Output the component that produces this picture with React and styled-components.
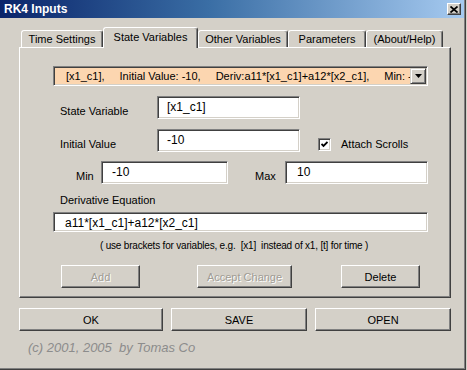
import React from "react";
import styled, { createGlobalStyle } from "styled-components";

const Global = createGlobalStyle`
  html, body { margin: 0; padding: 0; background: #d4d0c8; }
  body { font-family: "Liberation Sans", Arial, sans-serif; font-size: 11px; color: #000; }
  * { box-sizing: border-box; }
`;

const Window = styled.div`
  width: 466px;
  height: 370px;
  background: #d4d0c8;
  border-right: 1px solid #404040;
  border-bottom: 1px solid #404040;
  box-shadow: inset -1px -1px #808080;
  display: flex;
  flex-direction: column;
`;

const TitleBar = styled.div`
  height: 18px;
  width: 464px;
  background: linear-gradient(to right, #0a246a 0%, #3a6ea5 45%, #a6caf0 100%);
  display: flex;
  align-items: center;
  justify-content: space-between;
  padding: 0 3px 0 4px;
`;

const Title = styled.span`
  color: #fff;
  font-weight: bold;
  font-size: 12px;
`;

const CloseButton = styled.div`
  width: 14px;
  height: 12px;
  background: #d4d0c8;
  border: 1px solid;
  border-color: #fff #404040 #404040 #fff;
  box-shadow: inset -1px -1px #808080;
  display: flex;
  align-items: center;
  justify-content: center;
`;

const Body = styled.div`
  padding: 9px 0 0 19px;
  display: flex;
  flex-direction: column;
`;

const TabStrip = styled.div`
  height: 20px;
  display: flex;
  align-items: flex-end;
  padding-left: 2px;
`;

const Tab = styled.div`
  position: relative;
  z-index: ${(p) => (p.$active ? 2 : 1)};
  width: ${(p) => p.$w}px;
  height: ${(p) => (p.$active ? 21 : 17)}px;
  margin-bottom: ${(p) => (p.$active ? -1 : 0)}px;
  background: #d4d0c8;
  border: 1px solid;
  border-bottom: none;
  border-color: #fff #404040 transparent #fff;
  border-radius: 3px 3px 0 0;
  box-shadow: inset -1px 0 #808080;
  text-align: center;
  padding-top: ${(p) => (p.$active ? 3 : 2)}px;
  font-size: 11px;
  white-space: nowrap;
`;

const Panel = styled.div`
  width: 432px;
  height: 251px;
  border: 1px solid;
  border-color: #fff #404040 #404040 #fff;
  box-shadow: inset -1px -1px #808080;
  padding: 18px 0 0 33px;
  display: flex;
  flex-direction: column;
`;

const Combo = styled.div`
  width: 375px;
  height: 20px;
  display: flex;
  border: 1px solid;
  border-color: #808080 #fff #fff #808080;
  box-shadow: inset 1px 1px #404040, inset -1px -1px #d4d0c8;
  padding: 1px;
`;

const ComboText = styled.div`
  flex: 1;
  background: #fcd6b0;
  overflow: hidden;
  white-space: nowrap;
  display: flex;
  align-items: center;
  gap: 15px;
  padding-left: 11px;
`;

const DropButton = styled.div`
  width: 16px;
  height: 16px;
  background: #d4d0c8;
  border: 1px solid;
  border-color: #d4d0c8 #404040 #404040 #d4d0c8;
  box-shadow: inset 1px 1px #fff, inset -1px -1px #808080;
  display: flex;
  align-items: center;
  justify-content: center;
`;

const Row = styled.div`
  display: flex;
  align-items: center;
  height: ${(p) => p.$h || 23}px;
  margin-top: ${(p) => p.$mt || 0}px;
`;

const Label = styled.div`
  width: ${(p) => p.$w}px;
  padding-left: ${(p) => p.$pl || 0}px;
  margin-left: ${(p) => p.$ml || 0}px;
  align-self: flex-end;
  line-height: 14px;
  margin-bottom: 1px;
  white-space: nowrap;
`;

const TextBox = styled.div`
  width: ${(p) => p.$w}px;
  height: ${(p) => p.$h || 23}px;
  background: #fff;
  border: 1px solid;
  border-color: #808080 #fff #fff #808080;
  box-shadow: inset 1px 1px #404040, inset -1px -1px #d4d0c8;
  padding: 3px 0 0 ${(p) => p.$pl || 9}px;
  font-size: 12px;
  line-height: 14px;
  white-space: nowrap;
  overflow: hidden;
`;

const CheckBox = styled.div`
  width: 13px;
  height: 13px;
  margin-left: 18px;
  align-self: flex-end;
  margin-bottom: 1px;
  background: #fff;
  border: 1px solid;
  border-color: #808080 #fff #fff #808080;
  box-shadow: inset 1px 1px #404040, inset -1px -1px #d4d0c8;
  display: flex;
  align-items: center;
  justify-content: center;
`;

const CheckLabel = styled.div`
  margin-left: 10px;
  align-self: flex-end;
  line-height: 14px;
  margin-bottom: 1px;
`;

const SectionLabel = styled.div`
  margin-top: 9px;
  padding-left: 7px;
  line-height: 14px;
`;

const Hint = styled.div`
  margin-top: 7px;
  padding-left: 47px;
  font-size: 10px;
  letter-spacing: -0.2px;
  line-height: 14px;
  white-space: pre;
`;

const Button = styled.div`
  width: ${(p) => p.$w}px;
  height: 23px;
  margin-left: ${(p) => p.$ml || 0}px;
  background: #d4d0c8;
  border: 1px solid;
  border-color: #fff #404040 #404040 #fff;
  box-shadow: inset -1px -1px #808080;
  display: flex;
  align-items: center;
  justify-content: center;
  font-size: 11px;
  color: ${(p) => (p.$disabled ? "#a09c94" : "#000")};
  text-shadow: ${(p) => (p.$disabled ? "1px 1px #fff" : "none")};
`;

const ButtonBar = styled.div`
  display: flex;
  margin-top: 10px;
`;

const Copyright = styled.div`
  margin-top: 10px;
  padding-left: 9px;
  font-style: italic;
  font-size: 13px;
  line-height: 14px;
  color: #8c8c8c;
  white-space: pre;
`;

export default function App() {
  return (
    <>
      <Global />
      <Window>
        <TitleBar>
          <Title>RK4 Inputs</Title>
          <CloseButton>
            <svg width="8" height="7" viewBox="0 0 8 7">
              <path d="M0.5 0.5 L7.5 6.5 M7.5 0.5 L0.5 6.5" stroke="#000" strokeWidth="1.7" />
            </svg>
          </CloseButton>
        </TitleBar>
        <Body>
          <TabStrip>
            <Tab $w={82}>Time Settings</Tab>
            <Tab $w={95} $active>State Variables</Tab>
            <Tab $w={90}>Other Variables</Tab>
            <Tab $w={78}>Parameters</Tab>
            <Tab $w={77}>(About/Help)</Tab>
          </TabStrip>
          <Panel>
            <Combo>
              <ComboText>
                <span>[x1_c1],</span>
                <span>Initial Value: -10,</span>
                <span>Deriv:a11*[x1_c1]+a12*[x2_c1],</span>
                <span>Min: -10</span>
              </ComboText>
              <DropButton>
                <svg width="7" height="4" viewBox="0 0 7 4">
                  <path d="M0 0 H7 L3.5 4 Z" fill="#000" />
                </svg>
              </DropButton>
            </Combo>
            <Row $mt={10}>
              <Label $w={104} $pl={7}>State Variable</Label>
              <TextBox $w={143}>[x1_c1]</TextBox>
            </Row>
            <Row $mt={10}>
              <Label $w={104} $pl={7}>Initial Value</Label>
              <TextBox $w={143}>-10</TextBox>
              <CheckBox>
                <svg width="7" height="7" viewBox="0 0 7 7">
                  <path d="M0.5 3 L2.5 5 L6.5 1" stroke="#000" strokeWidth="1.8" fill="none" />
                </svg>
              </CheckBox>
              <CheckLabel>Attach Scrolls</CheckLabel>
            </Row>
            <Row $mt={9}>
              <Label $w={48} $pl={23}>Min</Label>
              <TextBox $w={127} $pl={10}>-10</TextBox>
              <Label $w={30} $ml={27}>Max</Label>
              <TextBox $w={143} $pl={11}>10</TextBox>
            </Row>
            <SectionLabel>Derivative Equation</SectionLabel>
            <Row $mt={5} $h={20}>
              <TextBox $w={375} $h={20} $pl={11}>a11*[x1_c1]+a12*[x2_c1]</TextBox>
            </Row>
            <Hint>( use brackets for variables, e.g.  [x1]  instead of x1, [t] for time )</Hint>
            <Row $mt={12}>
              <Button $w={79} $ml={8} $disabled>Add</Button>
              <Button $w={95} $ml={57} $disabled>Accept Change</Button>
              <Button $w={79} $ml={49}>Delete</Button>
            </Row>
          </Panel>
          <ButtonBar>
            <Button $w={144}>OK</Button>
            <Button $w={136} $ml={8}>SAVE</Button>
            <Button $w={136} $ml={8}>OPEN</Button>
          </ButtonBar>
          <Copyright>(c) 2001, 2005  by Tomas Co</Copyright>
        </Body>
      </Window>
    </>
  );
}
